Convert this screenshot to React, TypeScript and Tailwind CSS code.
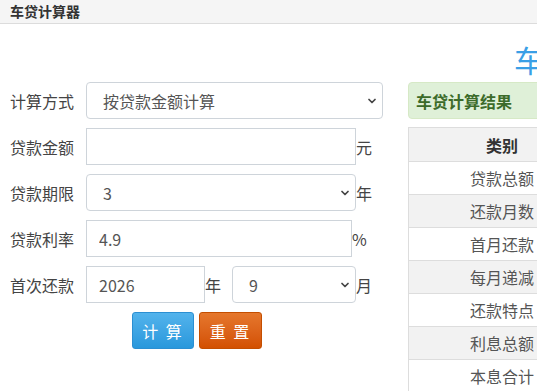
import { ChevronDown } from 'lucide-react';

const font = { fontFamily: '"Noto Sans CJK SC", "Noto Sans", sans-serif' };

const rows = [
  '贷款总额',
  '还款月数',
  '首月还款',
  '每月递减',
  '还款特点',
  '利息总额',
  '本息合计',
];

function Select({ value, width }: { value: string; width: string }) {
  return (
    <div className={`relative h-[37px] ${width}`}>
      <select
        defaultValue={value}
        className="w-full h-full appearance-none border border-[#ced4da] rounded-[4px] bg-white pl-[16px] text-[16px] text-[#555] outline-none"
      >
        <option>{value}</option>
      </select>
      <ChevronDown
        className="absolute right-[5px] top-[13px] w-[12px] h-[12px] text-[#444] pointer-events-none"
        strokeWidth={3.5}
      />
    </div>
  );
}

function Input({ value, width }: { value: string; width: string }) {
  return (
    <input
      type="text"
      defaultValue={value}
      className={`h-[37px] ${width} border border-[#ced4da] bg-white pl-[12px] text-[16px] text-[#555] outline-none`}
    />
  );
}

export default function App() {
  return (
    <div className="w-[537px] h-[391px] overflow-hidden bg-white text-[#333]" style={font}>
      <div className="h-[24px] bg-[#f5f5f5] border-b border-[#dcdcdc] pl-[10px] text-[14px] font-bold leading-[22px] text-[#333]">
        车贷计算器
      </div>

      <div className="w-[1100px]">
        <div className="h-[58px] pt-[20px] pl-[514px] text-[30px] leading-[30px] text-[#3a9fe6]">
          车贷计算器
        </div>

        <div className="flex">
          <div className="w-[408px] pl-[10px] flex flex-col gap-[9px] text-[16px] text-[#444]">
            <div className="flex items-center">
              <span className="w-[76px]">计算方式</span>
              <Select value="按贷款金额计算" width="w-[297px]" />
            </div>
            <div className="flex items-center">
              <span className="w-[76px]">贷款金额</span>
              <Input value="" width="w-[270px]" />
              <span>元</span>
            </div>
            <div className="flex items-center">
              <span className="w-[76px]">贷款期限</span>
              <Select value="3" width="w-[270px]" />
              <span>年</span>
            </div>
            <div className="flex items-center">
              <span className="w-[76px]">贷款利率</span>
              <Input value="4.9" width="w-[266px]" />
              <span>%</span>
            </div>
            <div className="flex items-center">
              <span className="w-[76px]">首次还款</span>
              <Input value="2026" width="w-[119px]" />
              <span className="w-[27px]">年</span>
              <Select value="9" width="w-[124px]" />
              <span>月</span>
            </div>
            <div className="w-[374px] flex justify-center gap-[5px]">
              <button className="w-[62px] h-[37px] rounded-[3px] border border-[#2b8fd2] bg-gradient-to-b from-[#52b3ec] to-[#2898dc] text-white text-[16px] tracking-[2px]">
                计 算
              </button>
              <button className="w-[63px] h-[37px] rounded-[3px] border border-[#c44e00] bg-gradient-to-b from-[#e5772c] to-[#d35000] text-white text-[16px] tracking-[2px]">
                重 置
              </button>
            </div>
          </div>

          <div className="w-[600px] flex flex-col">
            <div className="h-[37px] flex items-center border border-[#d6e9c6] rounded-[4px] bg-[#dff0d8] pl-[7px] text-[16px] font-bold text-[#3c6b2a]">
              车贷计算结果
            </div>
            <div className="mt-[8px] border-l border-t border-[#dddddd]">
              <div className="h-[34px] flex items-center bg-[#f2f2f2] border-b border-[#dddddd]">
                <div className="w-[186px] text-center font-bold text-[16px] text-[#333]">类别</div>
              </div>
              {rows.map((r, i) => (
                <div
                  key={r}
                  className={`h-[33px] flex items-center border-b border-[#dddddd] ${
                    i % 2 === 1 ? 'bg-[#f2f2f2]' : 'bg-white'
                  }`}
                >
                  <div className="w-[186px] text-center text-[16px] text-[#555]">{r}</div>
                </div>
              ))}
            </div>
          </div>
        </div>
      </div>
    </div>
  );
}
